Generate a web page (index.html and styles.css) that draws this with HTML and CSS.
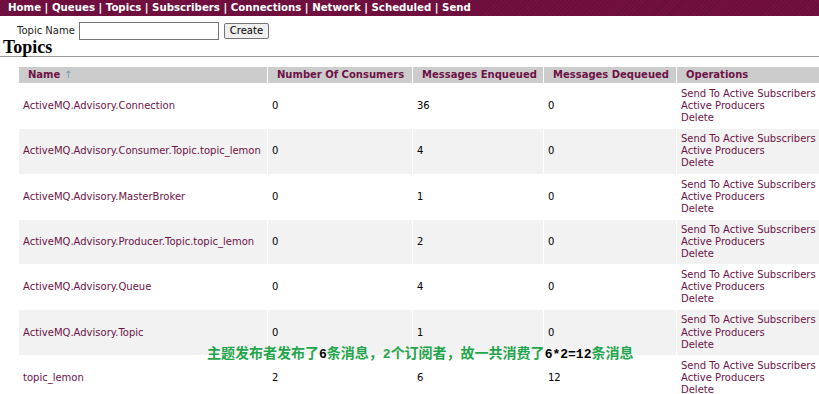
FILE: index.html
```html
<!DOCTYPE html>
<html lang="en">
<head>
    <meta charset="UTF-8">
    <title>Topics</title>
    <link rel="stylesheet" href="styles.css">
</head>
<body>
    <div class="nav">
        <a href="#">Home</a> | <a href="#">Queues</a> | <a href="#">Topics</a> | <a href="#">Subscribers</a> | <a href="#">Connections</a> | <a href="#">Network</a> | <a href="#">Scheduled</a> | <a href="#">Send</a>
    </div>

    <form class="create-form">
        <label>Topic Name</label>
        <input type="text" class="topic-input">
        <button type="button" class="create-button">Create</button>
    </form>

    <h2 class="title">Topics</h2>
    <hr class="rule">

    <div class="table-wrap">
        <table class="topics">
            <thead>
                <tr>
                    <th class="col-name"><a href="#">Name</a> <span class="sort">&#8593;</span></th>
                    <th class="col-cons">Number Of Consumers</th>
                    <th class="col-enq">Messages Enqueued</th>
                    <th class="col-deq">Messages Dequeued</th>
                    <th class="col-ops">Operations</th>
                </tr>
            </thead>
            <tbody>
                <tr>
                    <td><a href="#">ActiveMQ.Advisory.Connection</a></td>
                    <td>0</td><td>36</td><td>0</td>
                    <td class="ops"><a href="#">Send To Active Subscribers</a><br><a href="#">Active Producers</a><br><a href="#">Delete</a></td>
                </tr>
                <tr class="odd">
                    <td><a href="#">ActiveMQ.Advisory.Consumer.Topic.topic_lemon</a></td>
                    <td>0</td><td>4</td><td>0</td>
                    <td class="ops"><a href="#">Send To Active Subscribers</a><br><a href="#">Active Producers</a><br><a href="#">Delete</a></td>
                </tr>
                <tr>
                    <td><a href="#">ActiveMQ.Advisory.MasterBroker</a></td>
                    <td>0</td><td>1</td><td>0</td>
                    <td class="ops"><a href="#">Send To Active Subscribers</a><br><a href="#">Active Producers</a><br><a href="#">Delete</a></td>
                </tr>
                <tr class="odd">
                    <td><a href="#">ActiveMQ.Advisory.Producer.Topic.topic_lemon</a></td>
                    <td>0</td><td>2</td><td>0</td>
                    <td class="ops"><a href="#">Send To Active Subscribers</a><br><a href="#">Active Producers</a><br><a href="#">Delete</a></td>
                </tr>
                <tr>
                    <td><a href="#">ActiveMQ.Advisory.Queue</a></td>
                    <td>0</td><td>4</td><td>0</td>
                    <td class="ops"><a href="#">Send To Active Subscribers</a><br><a href="#">Active Producers</a><br><a href="#">Delete</a></td>
                </tr>
                <tr class="odd">
                    <td><a href="#">ActiveMQ.Advisory.Topic</a></td>
                    <td>0</td><td>1</td><td>0</td>
                    <td class="ops"><a href="#">Send To Active Subscribers</a><br><a href="#">Active Producers</a><br><a href="#">Delete</a></td>
                </tr>
                <tr>
                    <td><a href="#">topic_lemon</a></td>
                    <td>2</td><td>6</td><td>12</td>
                    <td class="ops"><a href="#">Send To Active Subscribers</a><br><a href="#">Active Producers</a><br><a href="#">Delete</a></td>
                </tr>
            </tbody>
        </table>

        <!-- 截图上的标注 -->
        <div class="note">主题发布者发布了<b>6</b>条消息，<span class="num">2</span>个订阅者，故一共消费了<b>6*2=12</b>条消息</div>
    </div>
</body>
</html>
```

FILE: styles.css
```css
body {
    margin: 0;
    font-family: "DejaVu Sans", Verdana, sans-serif;
    font-size: 10px;
    color: #000;
    overflow: hidden;
}

a {
    color: #6e1246;
    text-decoration: none;
}

.nav {
    height: 16px;
    line-height: 16px;
    padding-left: 8px;
    background: repeating-linear-gradient(135deg, #731041 0px, #731041 2px, #661039 2px, #661039 3px);
    color: #fff;
    font-weight: bold;
    font-size: 10.2px;
    white-space: nowrap;
}

.nav a {
    color: #fff;
}

.create-form {
    display: flex;
    align-items: center;
    gap: 4px;
    margin: 6px 0 0 17px;
    height: 17px;
}

.create-form label {
    color: #222;
}

.topic-input {
    width: 136px;
    height: 14px;
    margin: 0;
    padding: 1px;
    border: 1px solid #767676;
    font-size: 10px;
}

.create-button {
    height: 16px;
    margin: 0 0 0 1px;
    padding: 0 5px;
    border: 1px solid #767676;
    border-radius: 2px;
    background: #efefef;
    font-family: "DejaVu Sans", Verdana, sans-serif;
    font-size: 10px;
    line-height: 13px;
    color: #000;
}

.title {
    margin: 0 0 0 3px;
    font-family: "Liberation Serif", "Times New Roman", serif;
    font-size: 18px;
    font-weight: bold;
    line-height: 17px;
}

.rule {
    margin: 0;
    border: 0;
    border-top: 1px solid #999;
}

.table-wrap {
    position: relative;
    padding: 9px 0 0 18px;
}

.topics {
    width: 802px;
    border-collapse: separate;
    border-spacing: 1px;
    table-layout: fixed;
}

.topics th {
    background: #cccccc;
    color: #6e1246;
    text-align: left;
    font-weight: bold;
    height: 16px;
    padding: 0 0 0 9px;
    line-height: 16px;
    white-space: nowrap;
}

.topics th a {
    color: #6e1246;
}

.sort {
    color: #6f9fb6;
    font-weight: normal;
}

.col-name { width: 239px; }
.col-cons { width: 135px; }
.col-enq { width: 121px; }
.col-deq { width: 123px; }

.topics td {
    padding: 4px;
    line-height: 12.1px;
    vertical-align: middle;
    white-space: nowrap;
}

.topics tr.odd td {
    background: #f2f2f2;
}

.note {
    position: absolute;
    left: 207px;
    top: 287px;
    font-family: "Noto Sans CJK SC", sans-serif;
    font-size: 14px;
    font-weight: bold;
    line-height: 16px;
    color: #1fa54b;
    white-space: nowrap;
}

.note b,
.note .num {
    font-family: "Liberation Mono", monospace;
    font-size: 13px;
    font-weight: bold;
}

.note b {
    color: #000;
}
```
